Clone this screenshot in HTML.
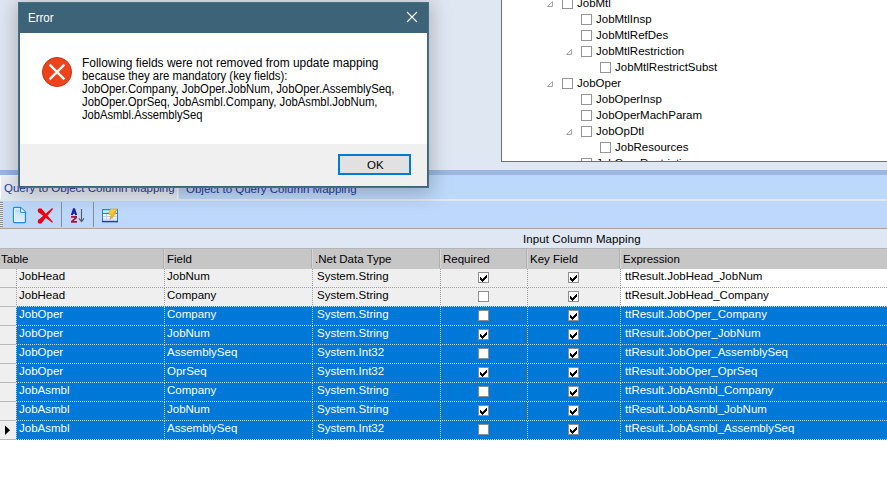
<!DOCTYPE html><html><head><meta charset="utf-8"><title>Error</title><style>
html,body{margin:0;padding:0}
body{width:887px;height:477px;position:relative;overflow:hidden;background:#ffffff;font-family:"Liberation Sans",sans-serif;color:#000}
.a{position:absolute}
.t{position:absolute;white-space:pre;line-height:1}
.cb{position:absolute;width:9px;height:9px;border:1px solid #8e8e8e;background:#fff}
.tcb{position:absolute;width:9px;height:9px;border:1px solid #959595;background:#fff}

</style></head><body>
<div class="a" style="left:0;top:0;width:887px;height:170px;background:#dfe7f2"></div>
<div class="a" style="left:501px;top:0;width:386px;height:161px;background:#fff;border-left:1px solid #707070;border-bottom:1px solid #707070;overflow:hidden">
<svg class="a" style="left:45px;top:1px" width="7" height="7" viewBox="0 0 7 7"><path d="M0.5 5.5 L5.5 5.5 L5.5 0.5 Z" fill="#fff" stroke="#a6a6a6" stroke-width="1"/></svg>
<div class="tcb" style="left:60px;top:-2px"></div>
<div class="t" style="left:75px;top:-2px;font-size:11.5px">JobMtl</div>
<div class="tcb" style="left:79px;top:14px"></div>
<div class="t" style="left:94px;top:14px;font-size:11.5px">JobMtlInsp</div>
<div class="tcb" style="left:79px;top:30px"></div>
<div class="t" style="left:94px;top:30px;font-size:11.5px">JobMtlRefDes</div>
<svg class="a" style="left:64px;top:49px" width="7" height="7" viewBox="0 0 7 7"><path d="M0.5 5.5 L5.5 5.5 L5.5 0.5 Z" fill="#fff" stroke="#a6a6a6" stroke-width="1"/></svg>
<div class="tcb" style="left:79px;top:46px"></div>
<div class="t" style="left:94px;top:46px;font-size:11.5px">JobMtlRestriction</div>
<div class="tcb" style="left:98px;top:62px"></div>
<div class="t" style="left:113px;top:62px;font-size:11.5px">JobMtlRestrictSubst</div>
<svg class="a" style="left:45px;top:81px" width="7" height="7" viewBox="0 0 7 7"><path d="M0.5 5.5 L5.5 5.5 L5.5 0.5 Z" fill="#fff" stroke="#a6a6a6" stroke-width="1"/></svg>
<div class="tcb" style="left:60px;top:78px"></div>
<div class="t" style="left:75px;top:78px;font-size:11.5px">JobOper</div>
<div class="tcb" style="left:79px;top:94px"></div>
<div class="t" style="left:94px;top:94px;font-size:11.5px">JobOperInsp</div>
<div class="tcb" style="left:79px;top:110px"></div>
<div class="t" style="left:94px;top:110px;font-size:11.5px">JobOperMachParam</div>
<svg class="a" style="left:64px;top:129px" width="7" height="7" viewBox="0 0 7 7"><path d="M0.5 5.5 L5.5 5.5 L5.5 0.5 Z" fill="#fff" stroke="#a6a6a6" stroke-width="1"/></svg>
<div class="tcb" style="left:79px;top:126px"></div>
<div class="t" style="left:94px;top:126px;font-size:11.5px">JobOpDtl</div>
<div class="tcb" style="left:98px;top:142px"></div>
<div class="t" style="left:113px;top:142px;font-size:11.5px">JobResources</div>
<div class="tcb" style="left:79px;top:158px"></div>
<div class="t" style="left:94px;top:158px;font-size:11.5px">JobOperRestriction</div>
</div>
<div class="a" style="left:0;top:170px;width:887px;height:5px;background:#99b7e0"></div>
<div class="a" style="left:0;top:175px;width:887px;height:24px;background:#bcd8fa"></div>
<div class="a" style="left:0;top:175px;width:179px;height:24px;background:linear-gradient(#f0f4f9,#dfe6ef)"></div>
<div class="a" style="left:0;top:176px;width:1px;height:23px;background:#fbfcfe"></div>
<div class="a" style="left:177px;top:176px;width:1px;height:23px;background:#f6f8fb"></div>
<div class="t" style="left:4px;top:183px;font-size:11.5px;color:#1c3f94">Query to Object Column Mapping</div>
<div class="t" style="left:186px;top:184px;font-size:11.5px;color:#1c3f94">Object to Query Column Mapping</div>
<div class="a" style="left:0;top:199px;width:887px;height:2px;background:#dfe7f1"></div>
<div class="a" style="left:0;top:201px;width:887px;height:27px;background:#bdd8fa"></div>
<div class="a" style="left:0;top:228px;width:887px;height:1px;background:#a3a3a3"></div>
<div class="a" style="left:0;top:202px;width:3px;height:25px;background:repeating-linear-gradient(#8c8c8c 0 1px,#e8e8e8 1px 2px)"></div>
<div class="a" style="left:61px;top:202px;width:1px;height:25px;background:#8d8d8d"></div>
<div class="a" style="left:93px;top:202px;width:1px;height:25px;background:#8d8d8d"></div>
<svg class="a" style="left:8px;top:204px" width="24" height="24" viewBox="0 0 24 24">
<defs><linearGradient id="dg" x1="0" y1="0" x2="0" y2="1"><stop offset="0" stop-color="#b6dcf8"/><stop offset="1" stop-color="#e4f3fe"/></linearGradient></defs>
<path d="M5.5 4.5 Q5.5 3.5 6.5 3.5 L12.5 3.5 L17.5 8 L17.5 17.5 Q17.5 18.5 16.5 18.5 L6.5 18.5 Q5.5 18.5 5.5 17.5 Z" fill="url(#dg)" stroke="#1a8ef0" stroke-width="1.3"/>
<path d="M6.6 4.6 L12 4.6 M6.6 4.6 L6.6 17.4 L16.4 17.4" stroke="#fff" stroke-width="0.8" fill="none"/>
<path d="M12.6 3.8 L17.2 8.2 L12.6 8.2 Z" fill="#fff"/>
<path d="M12.5 3.5 L12.5 8.4 L17.5 8.4" stroke="#1a8ef0" stroke-width="1" fill="none"/>
</svg>
<svg class="a" style="left:34px;top:204px" width="24" height="24" viewBox="0 0 24 24">
<g fill="#ee0010">
<polygon points="7.58,4.83 19.01,17.96 18.19,18.84 4.42,8.17"/><circle cx="6" cy="6.5" r="2.3"/>
<polygon points="4.35,15.9 18.17,4.08 19.03,4.92 7.65,19.1"/><circle cx="6" cy="17.5" r="2.3"/>
</g></svg>
<svg class="a" style="left:66px;top:204px" width="24" height="24" viewBox="0 0 24 24">
<path d="M5.8 11 L8 4.5 L10.2 11" stroke="#1c1ca6" stroke-width="1.9" fill="none" stroke-linejoin="bevel"/>
<path d="M6.5 9 H9.5" stroke="#1c1ca6" stroke-width="1.4"/>
<path d="M5 10.5 H7 M9 10.5 H11" stroke="#1c1ca6" stroke-width="1"/>
<path d="M5 12.8 H11 M10.6 13.3 L5.6 17.6 M5 17.9 H11" stroke="#b0103c" stroke-width="1.7" fill="none"/>
<path d="M15.5 5 V17" stroke="#5a5a5a" stroke-width="1.1"/>
<path d="M13 14.3 L15.5 17.6 L18 14.3" stroke="#5a5a5a" stroke-width="1.2" fill="none"/>
</svg>
<svg class="a" style="left:98px;top:204px" width="24" height="24" viewBox="0 0 24 24">
<defs><linearGradient id="hg" x1="0" y1="0" x2="0" y2="1"><stop offset="0" stop-color="#7cc4f4"/><stop offset="0.5" stop-color="#e8f6ff"/><stop offset="1" stop-color="#9fd0f4"/></linearGradient>
<linearGradient id="bg2" x1="0" y1="0" x2="1" y2="1"><stop offset="0" stop-color="#ffe45a"/><stop offset="1" stop-color="#e09a00"/></linearGradient></defs>
<rect x="4.5" y="5.5" width="15" height="12" fill="#fff" stroke="#1c86e6" stroke-width="1"/>
<rect x="5" y="6" width="14" height="3" fill="url(#hg)"/>
<path d="M5 9.5 H19" stroke="#1c86e6" stroke-width="1"/>
<path d="M4 17.5 H20" stroke="#1a3cb4" stroke-width="1.6"/>
<path d="M5 12.5 H19 M5 15 H19 M8.5 10 V17 M14.5 10 V17" stroke="#c9ccd2" stroke-width="1"/>
<path d="M12.5 5 L19.5 5 L16.5 9 L18.5 9 L12 15.5 L13.2 10.5 L10.5 10.5 Z" fill="url(#bg2)" stroke="#c88a00" stroke-width="0.5"/>
</svg>
<div class="a" style="left:0;top:229px;width:887px;height:19px;background:#dee7f3"></div>
<div class="t" style="left:523px;top:234px;font-size:11.5px;letter-spacing:0.1px">Input Column Mapping</div>
<div class="a" style="left:0;top:268px;width:16px;height:19px;background:#efefef"></div>
<div class="a" style="left:16px;top:268px;width:604px;height:19px;background:#efefef"></div>
<div class="a" style="left:620px;top:268px;width:267px;height:19px;background:#fff"></div>
<div class="t" style="left:19px;top:271px;font-size:11.5px;color:#000">JobHead</div>
<div class="t" style="left:167px;top:271px;font-size:11.5px;color:#000">JobNum</div>
<div class="t" style="left:317px;top:271px;font-size:11.5px;color:#000">System.String</div>
<div class="t" style="left:625px;top:271px;font-size:11.5px;color:#000">ttResult.JobHead_JobNum</div>
<div class="cb" style="left:478px;top:272px"><svg class="a" style="left:1px;top:2px" width="7" height="7" viewBox="0 0 7 7" shape-rendering="crispEdges"><path d="M6 0h1v1h-1zM5 1h2v1h-2zM0 2h1v1h-1zM4 2h3v1h-3zM0 3h2v1h-2zM3 3h3v1h-3zM0 4h5v1h-5zM1 5h3v1h-3zM2 6h1v1h-1z" fill="#000"/></svg></div>
<div class="cb" style="left:568px;top:272px"><svg class="a" style="left:1px;top:2px" width="7" height="7" viewBox="0 0 7 7" shape-rendering="crispEdges"><path d="M6 0h1v1h-1zM5 1h2v1h-2zM0 2h1v1h-1zM4 2h3v1h-3zM0 3h2v1h-2zM3 3h3v1h-3zM0 4h5v1h-5zM1 5h3v1h-3zM2 6h1v1h-1z" fill="#000"/></svg></div>
<div class="a" style="left:0;top:287px;width:16px;height:19px;background:#efefef"></div>
<div class="a" style="left:16px;top:287px;width:604px;height:19px;background:#efefef"></div>
<div class="a" style="left:620px;top:287px;width:267px;height:19px;background:#fff"></div>
<div class="t" style="left:19px;top:290px;font-size:11.5px;color:#000">JobHead</div>
<div class="t" style="left:167px;top:290px;font-size:11.5px;color:#000">Company</div>
<div class="t" style="left:317px;top:290px;font-size:11.5px;color:#000">System.String</div>
<div class="t" style="left:625px;top:290px;font-size:11.5px;color:#000">ttResult.JobHead_Company</div>
<div class="cb" style="left:478px;top:291px"></div>
<div class="cb" style="left:568px;top:291px"><svg class="a" style="left:1px;top:2px" width="7" height="7" viewBox="0 0 7 7" shape-rendering="crispEdges"><path d="M6 0h1v1h-1zM5 1h2v1h-2zM0 2h1v1h-1zM4 2h3v1h-3zM0 3h2v1h-2zM3 3h3v1h-3zM0 4h5v1h-5zM1 5h3v1h-3zM2 6h1v1h-1z" fill="#000"/></svg></div>
<div class="a" style="left:0;top:306px;width:16px;height:19px;background:#efefef"></div>
<div class="a" style="left:16px;top:306px;width:604px;height:19px;background:#0078d7"></div>
<div class="a" style="left:620px;top:306px;width:267px;height:19px;background:#0078d7"></div>
<div class="t" style="left:19px;top:309px;font-size:11.5px;color:#fff">JobOper</div>
<div class="t" style="left:167px;top:309px;font-size:11.5px;color:#fff">Company</div>
<div class="t" style="left:317px;top:309px;font-size:11.5px;color:#fff">System.String</div>
<div class="t" style="left:625px;top:309px;font-size:11.5px;color:#fff">ttResult.JobOper_Company</div>
<div class="cb" style="left:478px;top:310px"></div>
<div class="cb" style="left:568px;top:310px"><svg class="a" style="left:1px;top:2px" width="7" height="7" viewBox="0 0 7 7" shape-rendering="crispEdges"><path d="M6 0h1v1h-1zM5 1h2v1h-2zM0 2h1v1h-1zM4 2h3v1h-3zM0 3h2v1h-2zM3 3h3v1h-3zM0 4h5v1h-5zM1 5h3v1h-3zM2 6h1v1h-1z" fill="#000"/></svg></div>
<div class="a" style="left:0;top:325px;width:16px;height:19px;background:#efefef"></div>
<div class="a" style="left:16px;top:325px;width:604px;height:19px;background:#0078d7"></div>
<div class="a" style="left:620px;top:325px;width:267px;height:19px;background:#0078d7"></div>
<div class="t" style="left:19px;top:328px;font-size:11.5px;color:#fff">JobOper</div>
<div class="t" style="left:167px;top:328px;font-size:11.5px;color:#fff">JobNum</div>
<div class="t" style="left:317px;top:328px;font-size:11.5px;color:#fff">System.String</div>
<div class="t" style="left:625px;top:328px;font-size:11.5px;color:#fff">ttResult.JobOper_JobNum</div>
<div class="cb" style="left:478px;top:329px"><svg class="a" style="left:1px;top:2px" width="7" height="7" viewBox="0 0 7 7" shape-rendering="crispEdges"><path d="M6 0h1v1h-1zM5 1h2v1h-2zM0 2h1v1h-1zM4 2h3v1h-3zM0 3h2v1h-2zM3 3h3v1h-3zM0 4h5v1h-5zM1 5h3v1h-3zM2 6h1v1h-1z" fill="#000"/></svg></div>
<div class="cb" style="left:568px;top:329px"><svg class="a" style="left:1px;top:2px" width="7" height="7" viewBox="0 0 7 7" shape-rendering="crispEdges"><path d="M6 0h1v1h-1zM5 1h2v1h-2zM0 2h1v1h-1zM4 2h3v1h-3zM0 3h2v1h-2zM3 3h3v1h-3zM0 4h5v1h-5zM1 5h3v1h-3zM2 6h1v1h-1z" fill="#000"/></svg></div>
<div class="a" style="left:0;top:344px;width:16px;height:19px;background:#efefef"></div>
<div class="a" style="left:16px;top:344px;width:604px;height:19px;background:#0078d7"></div>
<div class="a" style="left:620px;top:344px;width:267px;height:19px;background:#0078d7"></div>
<div class="t" style="left:19px;top:347px;font-size:11.5px;color:#fff">JobOper</div>
<div class="t" style="left:167px;top:347px;font-size:11.5px;color:#fff">AssemblySeq</div>
<div class="t" style="left:317px;top:347px;font-size:11.5px;color:#fff">System.Int32</div>
<div class="t" style="left:625px;top:347px;font-size:11.5px;color:#fff">ttResult.JobOper_AssemblySeq</div>
<div class="cb" style="left:478px;top:348px"></div>
<div class="cb" style="left:568px;top:348px"><svg class="a" style="left:1px;top:2px" width="7" height="7" viewBox="0 0 7 7" shape-rendering="crispEdges"><path d="M6 0h1v1h-1zM5 1h2v1h-2zM0 2h1v1h-1zM4 2h3v1h-3zM0 3h2v1h-2zM3 3h3v1h-3zM0 4h5v1h-5zM1 5h3v1h-3zM2 6h1v1h-1z" fill="#000"/></svg></div>
<div class="a" style="left:0;top:363px;width:16px;height:19px;background:#efefef"></div>
<div class="a" style="left:16px;top:363px;width:604px;height:19px;background:#0078d7"></div>
<div class="a" style="left:620px;top:363px;width:267px;height:19px;background:#0078d7"></div>
<div class="t" style="left:19px;top:366px;font-size:11.5px;color:#fff">JobOper</div>
<div class="t" style="left:167px;top:366px;font-size:11.5px;color:#fff">OprSeq</div>
<div class="t" style="left:317px;top:366px;font-size:11.5px;color:#fff">System.Int32</div>
<div class="t" style="left:625px;top:366px;font-size:11.5px;color:#fff">ttResult.JobOper_OprSeq</div>
<div class="cb" style="left:478px;top:367px"><svg class="a" style="left:1px;top:2px" width="7" height="7" viewBox="0 0 7 7" shape-rendering="crispEdges"><path d="M6 0h1v1h-1zM5 1h2v1h-2zM0 2h1v1h-1zM4 2h3v1h-3zM0 3h2v1h-2zM3 3h3v1h-3zM0 4h5v1h-5zM1 5h3v1h-3zM2 6h1v1h-1z" fill="#000"/></svg></div>
<div class="cb" style="left:568px;top:367px"><svg class="a" style="left:1px;top:2px" width="7" height="7" viewBox="0 0 7 7" shape-rendering="crispEdges"><path d="M6 0h1v1h-1zM5 1h2v1h-2zM0 2h1v1h-1zM4 2h3v1h-3zM0 3h2v1h-2zM3 3h3v1h-3zM0 4h5v1h-5zM1 5h3v1h-3zM2 6h1v1h-1z" fill="#000"/></svg></div>
<div class="a" style="left:0;top:382px;width:16px;height:19px;background:#efefef"></div>
<div class="a" style="left:16px;top:382px;width:604px;height:19px;background:#0078d7"></div>
<div class="a" style="left:620px;top:382px;width:267px;height:19px;background:#0078d7"></div>
<div class="t" style="left:19px;top:385px;font-size:11.5px;color:#fff">JobAsmbl</div>
<div class="t" style="left:167px;top:385px;font-size:11.5px;color:#fff">Company</div>
<div class="t" style="left:317px;top:385px;font-size:11.5px;color:#fff">System.String</div>
<div class="t" style="left:625px;top:385px;font-size:11.5px;color:#fff">ttResult.JobAsmbl_Company</div>
<div class="cb" style="left:478px;top:386px"></div>
<div class="cb" style="left:568px;top:386px"><svg class="a" style="left:1px;top:2px" width="7" height="7" viewBox="0 0 7 7" shape-rendering="crispEdges"><path d="M6 0h1v1h-1zM5 1h2v1h-2zM0 2h1v1h-1zM4 2h3v1h-3zM0 3h2v1h-2zM3 3h3v1h-3zM0 4h5v1h-5zM1 5h3v1h-3zM2 6h1v1h-1z" fill="#000"/></svg></div>
<div class="a" style="left:0;top:401px;width:16px;height:19px;background:#efefef"></div>
<div class="a" style="left:16px;top:401px;width:604px;height:19px;background:#0078d7"></div>
<div class="a" style="left:620px;top:401px;width:267px;height:19px;background:#0078d7"></div>
<div class="t" style="left:19px;top:404px;font-size:11.5px;color:#fff">JobAsmbl</div>
<div class="t" style="left:167px;top:404px;font-size:11.5px;color:#fff">JobNum</div>
<div class="t" style="left:317px;top:404px;font-size:11.5px;color:#fff">System.String</div>
<div class="t" style="left:625px;top:404px;font-size:11.5px;color:#fff">ttResult.JobAsmbl_JobNum</div>
<div class="cb" style="left:478px;top:405px"><svg class="a" style="left:1px;top:2px" width="7" height="7" viewBox="0 0 7 7" shape-rendering="crispEdges"><path d="M6 0h1v1h-1zM5 1h2v1h-2zM0 2h1v1h-1zM4 2h3v1h-3zM0 3h2v1h-2zM3 3h3v1h-3zM0 4h5v1h-5zM1 5h3v1h-3zM2 6h1v1h-1z" fill="#000"/></svg></div>
<div class="cb" style="left:568px;top:405px"><svg class="a" style="left:1px;top:2px" width="7" height="7" viewBox="0 0 7 7" shape-rendering="crispEdges"><path d="M6 0h1v1h-1zM5 1h2v1h-2zM0 2h1v1h-1zM4 2h3v1h-3zM0 3h2v1h-2zM3 3h3v1h-3zM0 4h5v1h-5zM1 5h3v1h-3zM2 6h1v1h-1z" fill="#000"/></svg></div>
<div class="a" style="left:0;top:420px;width:16px;height:19px;background:#efefef"></div>
<div class="a" style="left:16px;top:420px;width:604px;height:20px;background:#0078d7"></div>
<div class="a" style="left:620px;top:420px;width:267px;height:20px;background:#0078d7"></div>
<div class="t" style="left:19px;top:423px;font-size:11.5px;color:#fff">JobAsmbl</div>
<div class="t" style="left:167px;top:423px;font-size:11.5px;color:#fff">AssemblySeq</div>
<div class="t" style="left:317px;top:423px;font-size:11.5px;color:#fff">System.Int32</div>
<div class="t" style="left:625px;top:423px;font-size:11.5px;color:#fff">ttResult.JobAsmbl_AssemblySeq</div>
<div class="cb" style="left:478px;top:424px"></div>
<div class="cb" style="left:568px;top:424px"><svg class="a" style="left:1px;top:2px" width="7" height="7" viewBox="0 0 7 7" shape-rendering="crispEdges"><path d="M6 0h1v1h-1zM5 1h2v1h-2zM0 2h1v1h-1zM4 2h3v1h-3zM0 3h2v1h-2zM3 3h3v1h-3zM0 4h5v1h-5zM1 5h3v1h-3zM2 6h1v1h-1z" fill="#000"/></svg></div>
<div class="a" style="left:0;top:287px;width:16px;height:1px;background:#b9b9b9"></div>
<div class="a" style="left:16px;top:287px;width:871px;height:1px;background:repeating-linear-gradient(90deg,#a0a0a0 0 1px,transparent 1px 2px)"></div>
<div class="a" style="left:0;top:306px;width:16px;height:1px;background:#b9b9b9"></div>
<div class="a" style="left:16px;top:306px;width:871px;height:1px;background:repeating-linear-gradient(90deg,#d6d6cf 0 1px,transparent 1px 2px)"></div>
<div class="a" style="left:0;top:325px;width:16px;height:1px;background:#b9b9b9"></div>
<div class="a" style="left:16px;top:325px;width:871px;height:1px;background:repeating-linear-gradient(90deg,#d6d6cf 0 1px,transparent 1px 2px)"></div>
<div class="a" style="left:0;top:344px;width:16px;height:1px;background:#b9b9b9"></div>
<div class="a" style="left:16px;top:344px;width:871px;height:1px;background:repeating-linear-gradient(90deg,#d6d6cf 0 1px,transparent 1px 2px)"></div>
<div class="a" style="left:0;top:363px;width:16px;height:1px;background:#b9b9b9"></div>
<div class="a" style="left:16px;top:363px;width:871px;height:1px;background:repeating-linear-gradient(90deg,#d6d6cf 0 1px,transparent 1px 2px)"></div>
<div class="a" style="left:0;top:382px;width:16px;height:1px;background:#b9b9b9"></div>
<div class="a" style="left:16px;top:382px;width:871px;height:1px;background:repeating-linear-gradient(90deg,#d6d6cf 0 1px,transparent 1px 2px)"></div>
<div class="a" style="left:0;top:401px;width:16px;height:1px;background:#b9b9b9"></div>
<div class="a" style="left:16px;top:401px;width:871px;height:1px;background:repeating-linear-gradient(90deg,#d6d6cf 0 1px,transparent 1px 2px)"></div>
<div class="a" style="left:0;top:420px;width:16px;height:1px;background:#b9b9b9"></div>
<div class="a" style="left:16px;top:420px;width:871px;height:1px;background:repeating-linear-gradient(90deg,#d6d6cf 0 1px,transparent 1px 2px)"></div>
<div class="a" style="left:0;top:439px;width:16px;height:1px;background:#b9b9b9"></div>
<div class="a" style="left:16px;top:439px;width:871px;height:1px;background:repeating-linear-gradient(90deg,#d6d6cf 0 1px,transparent 1px 2px)"></div>
<div class="a" style="left:16px;top:269px;width:1px;height:18px;background:repeating-linear-gradient(#a0a0a0 0 1px,transparent 1px 2px)"></div>
<div class="a" style="left:164px;top:269px;width:1px;height:18px;background:repeating-linear-gradient(#a0a0a0 0 1px,transparent 1px 2px)"></div>
<div class="a" style="left:312px;top:269px;width:1px;height:18px;background:repeating-linear-gradient(#a0a0a0 0 1px,transparent 1px 2px)"></div>
<div class="a" style="left:440px;top:269px;width:1px;height:18px;background:repeating-linear-gradient(#a0a0a0 0 1px,transparent 1px 2px)"></div>
<div class="a" style="left:527px;top:269px;width:1px;height:18px;background:repeating-linear-gradient(#a0a0a0 0 1px,transparent 1px 2px)"></div>
<div class="a" style="left:620px;top:269px;width:1px;height:18px;background:repeating-linear-gradient(#a0a0a0 0 1px,transparent 1px 2px)"></div>
<div class="a" style="left:16px;top:288px;width:1px;height:18px;background:repeating-linear-gradient(#a0a0a0 0 1px,transparent 1px 2px)"></div>
<div class="a" style="left:164px;top:288px;width:1px;height:18px;background:repeating-linear-gradient(#a0a0a0 0 1px,transparent 1px 2px)"></div>
<div class="a" style="left:312px;top:288px;width:1px;height:18px;background:repeating-linear-gradient(#a0a0a0 0 1px,transparent 1px 2px)"></div>
<div class="a" style="left:440px;top:288px;width:1px;height:18px;background:repeating-linear-gradient(#a0a0a0 0 1px,transparent 1px 2px)"></div>
<div class="a" style="left:527px;top:288px;width:1px;height:18px;background:repeating-linear-gradient(#a0a0a0 0 1px,transparent 1px 2px)"></div>
<div class="a" style="left:620px;top:288px;width:1px;height:18px;background:repeating-linear-gradient(#a0a0a0 0 1px,transparent 1px 2px)"></div>
<div class="a" style="left:16px;top:307px;width:1px;height:18px;background:repeating-linear-gradient(#c9c9c9 0 1px,transparent 1px 2px)"></div>
<div class="a" style="left:164px;top:307px;width:1px;height:18px;background:repeating-linear-gradient(#c9c9c9 0 1px,transparent 1px 2px)"></div>
<div class="a" style="left:312px;top:307px;width:1px;height:18px;background:repeating-linear-gradient(#c9c9c9 0 1px,transparent 1px 2px)"></div>
<div class="a" style="left:440px;top:307px;width:1px;height:18px;background:repeating-linear-gradient(#c9c9c9 0 1px,transparent 1px 2px)"></div>
<div class="a" style="left:527px;top:307px;width:1px;height:18px;background:repeating-linear-gradient(#c9c9c9 0 1px,transparent 1px 2px)"></div>
<div class="a" style="left:620px;top:307px;width:1px;height:18px;background:repeating-linear-gradient(#c9c9c9 0 1px,transparent 1px 2px)"></div>
<div class="a" style="left:16px;top:326px;width:1px;height:18px;background:repeating-linear-gradient(#c9c9c9 0 1px,transparent 1px 2px)"></div>
<div class="a" style="left:164px;top:326px;width:1px;height:18px;background:repeating-linear-gradient(#c9c9c9 0 1px,transparent 1px 2px)"></div>
<div class="a" style="left:312px;top:326px;width:1px;height:18px;background:repeating-linear-gradient(#c9c9c9 0 1px,transparent 1px 2px)"></div>
<div class="a" style="left:440px;top:326px;width:1px;height:18px;background:repeating-linear-gradient(#c9c9c9 0 1px,transparent 1px 2px)"></div>
<div class="a" style="left:527px;top:326px;width:1px;height:18px;background:repeating-linear-gradient(#c9c9c9 0 1px,transparent 1px 2px)"></div>
<div class="a" style="left:620px;top:326px;width:1px;height:18px;background:repeating-linear-gradient(#c9c9c9 0 1px,transparent 1px 2px)"></div>
<div class="a" style="left:16px;top:345px;width:1px;height:18px;background:repeating-linear-gradient(#c9c9c9 0 1px,transparent 1px 2px)"></div>
<div class="a" style="left:164px;top:345px;width:1px;height:18px;background:repeating-linear-gradient(#c9c9c9 0 1px,transparent 1px 2px)"></div>
<div class="a" style="left:312px;top:345px;width:1px;height:18px;background:repeating-linear-gradient(#c9c9c9 0 1px,transparent 1px 2px)"></div>
<div class="a" style="left:440px;top:345px;width:1px;height:18px;background:repeating-linear-gradient(#c9c9c9 0 1px,transparent 1px 2px)"></div>
<div class="a" style="left:527px;top:345px;width:1px;height:18px;background:repeating-linear-gradient(#c9c9c9 0 1px,transparent 1px 2px)"></div>
<div class="a" style="left:620px;top:345px;width:1px;height:18px;background:repeating-linear-gradient(#c9c9c9 0 1px,transparent 1px 2px)"></div>
<div class="a" style="left:16px;top:364px;width:1px;height:18px;background:repeating-linear-gradient(#c9c9c9 0 1px,transparent 1px 2px)"></div>
<div class="a" style="left:164px;top:364px;width:1px;height:18px;background:repeating-linear-gradient(#c9c9c9 0 1px,transparent 1px 2px)"></div>
<div class="a" style="left:312px;top:364px;width:1px;height:18px;background:repeating-linear-gradient(#c9c9c9 0 1px,transparent 1px 2px)"></div>
<div class="a" style="left:440px;top:364px;width:1px;height:18px;background:repeating-linear-gradient(#c9c9c9 0 1px,transparent 1px 2px)"></div>
<div class="a" style="left:527px;top:364px;width:1px;height:18px;background:repeating-linear-gradient(#c9c9c9 0 1px,transparent 1px 2px)"></div>
<div class="a" style="left:620px;top:364px;width:1px;height:18px;background:repeating-linear-gradient(#c9c9c9 0 1px,transparent 1px 2px)"></div>
<div class="a" style="left:16px;top:383px;width:1px;height:18px;background:repeating-linear-gradient(#c9c9c9 0 1px,transparent 1px 2px)"></div>
<div class="a" style="left:164px;top:383px;width:1px;height:18px;background:repeating-linear-gradient(#c9c9c9 0 1px,transparent 1px 2px)"></div>
<div class="a" style="left:312px;top:383px;width:1px;height:18px;background:repeating-linear-gradient(#c9c9c9 0 1px,transparent 1px 2px)"></div>
<div class="a" style="left:440px;top:383px;width:1px;height:18px;background:repeating-linear-gradient(#c9c9c9 0 1px,transparent 1px 2px)"></div>
<div class="a" style="left:527px;top:383px;width:1px;height:18px;background:repeating-linear-gradient(#c9c9c9 0 1px,transparent 1px 2px)"></div>
<div class="a" style="left:620px;top:383px;width:1px;height:18px;background:repeating-linear-gradient(#c9c9c9 0 1px,transparent 1px 2px)"></div>
<div class="a" style="left:16px;top:402px;width:1px;height:18px;background:repeating-linear-gradient(#c9c9c9 0 1px,transparent 1px 2px)"></div>
<div class="a" style="left:164px;top:402px;width:1px;height:18px;background:repeating-linear-gradient(#c9c9c9 0 1px,transparent 1px 2px)"></div>
<div class="a" style="left:312px;top:402px;width:1px;height:18px;background:repeating-linear-gradient(#c9c9c9 0 1px,transparent 1px 2px)"></div>
<div class="a" style="left:440px;top:402px;width:1px;height:18px;background:repeating-linear-gradient(#c9c9c9 0 1px,transparent 1px 2px)"></div>
<div class="a" style="left:527px;top:402px;width:1px;height:18px;background:repeating-linear-gradient(#c9c9c9 0 1px,transparent 1px 2px)"></div>
<div class="a" style="left:620px;top:402px;width:1px;height:18px;background:repeating-linear-gradient(#c9c9c9 0 1px,transparent 1px 2px)"></div>
<div class="a" style="left:16px;top:421px;width:1px;height:18px;background:repeating-linear-gradient(#c9c9c9 0 1px,transparent 1px 2px)"></div>
<div class="a" style="left:164px;top:421px;width:1px;height:18px;background:repeating-linear-gradient(#c9c9c9 0 1px,transparent 1px 2px)"></div>
<div class="a" style="left:312px;top:421px;width:1px;height:18px;background:repeating-linear-gradient(#c9c9c9 0 1px,transparent 1px 2px)"></div>
<div class="a" style="left:440px;top:421px;width:1px;height:18px;background:repeating-linear-gradient(#c9c9c9 0 1px,transparent 1px 2px)"></div>
<div class="a" style="left:527px;top:421px;width:1px;height:18px;background:repeating-linear-gradient(#c9c9c9 0 1px,transparent 1px 2px)"></div>
<div class="a" style="left:620px;top:421px;width:1px;height:18px;background:repeating-linear-gradient(#c9c9c9 0 1px,transparent 1px 2px)"></div>
<div class="a" style="left:0;top:248px;width:887px;height:21px;background:#c6c6c6"></div>
<div class="a" style="left:0;top:248px;width:887px;height:1px;background:#b4b4b4"></div>
<div class="a" style="left:164px;top:249px;width:1px;height:19px;background:#d6d6d6"></div>
<div class="a" style="left:163px;top:249px;width:1px;height:19px;background:#b0b0b0"></div>
<div class="a" style="left:312px;top:249px;width:1px;height:19px;background:#d6d6d6"></div>
<div class="a" style="left:311px;top:249px;width:1px;height:19px;background:#b0b0b0"></div>
<div class="a" style="left:440px;top:249px;width:1px;height:19px;background:#d6d6d6"></div>
<div class="a" style="left:439px;top:249px;width:1px;height:19px;background:#b0b0b0"></div>
<div class="a" style="left:527px;top:249px;width:1px;height:19px;background:#d6d6d6"></div>
<div class="a" style="left:526px;top:249px;width:1px;height:19px;background:#b0b0b0"></div>
<div class="a" style="left:620px;top:249px;width:1px;height:19px;background:#d6d6d6"></div>
<div class="a" style="left:619px;top:249px;width:1px;height:19px;background:#b0b0b0"></div>
<div class="t" style="left:1px;top:254px;font-size:11.5px">Table</div>
<div class="t" style="left:167px;top:254px;font-size:11.5px">Field</div>
<div class="t" style="left:315px;top:254px;font-size:11.5px">.Net Data Type</div>
<div class="t" style="left:443px;top:254px;font-size:11.5px">Required</div>
<div class="t" style="left:530px;top:254px;font-size:11.5px">Key Field</div>
<div class="t" style="left:623px;top:254px;font-size:11.5px">Expression</div>
<svg class="a" style="left:5px;top:425px" width="6" height="11" viewBox="0 0 6 11"><path d="M0 0.5 L5 5.25 L0 10Z" fill="#000"/></svg>
<div class="a" style="left:18px;top:2px;width:411px;height:186px;box-shadow:0 3px 18px 3px rgba(0,0,0,0.22)"></div>
<div class="a" style="left:18px;top:2px;width:409px;height:184px;border:1px solid #4a6f83;background:#3c6378"></div>
<div class="a" style="left:20px;top:33px;width:407px;height:111px;background:#fff"></div>
<div class="a" style="left:20px;top:144px;width:407px;height:42px;background:#f0f0f0"></div>
<div class="t" style="left:28px;top:12px;font-size:12.5px;color:#fff;transform-origin:0 0;transform:scaleX(0.92)">Error</div>
<svg class="a" style="left:406px;top:11px" width="12" height="12" viewBox="0 0 12 12"><path d="M1 1 L11 11 M11 1 L1 11" stroke="#fff" stroke-width="1.1"/></svg>
<svg class="a" style="left:41px;top:56px" width="32" height="32" viewBox="0 0 32 32">
<circle cx="16" cy="16" r="14.6" fill="#ee421b" stroke="#b8321a" stroke-width="0.9"/>
<path d="M8.6 8.6 L23.4 23.4 M23.4 8.6 L8.6 23.4" stroke="#fff" stroke-width="2.3"/>
</svg>
<div class="t" style="left:81.5px;top:57px;font-size:12px;color:#000;transform-origin:0 0;transform:scaleX(0.9944)">Following fields were not removed from update mapping</div>
<div class="t" style="left:81.5px;top:70px;font-size:12px;color:#000;transform-origin:0 0;transform:scaleX(0.9480)">because they are mandatory (key fields):</div>
<div class="t" style="left:81.5px;top:83px;font-size:12px;color:#000;transform-origin:0 0;transform:scaleX(0.9433)">JobOper.Company, JobOper.JobNum, JobOper.AssemblySeq,</div>
<div class="t" style="left:81.5px;top:96px;font-size:12px;color:#000;transform-origin:0 0;transform:scaleX(0.9413)">JobOper.OprSeq, JobAsmbl.Company, JobAsmbl.JobNum,</div>
<div class="t" style="left:81.5px;top:109px;font-size:12px;color:#000;transform-origin:0 0;transform:scaleX(0.9313)">JobAsmbl.AssemblySeq</div>
<div class="a" style="left:338px;top:154px;width:69px;height:17px;border:2px solid #0078d7;background:#e1e1e1"></div>
<div class="t" style="left:367px;top:160px;font-size:11.5px">OK</div>
</body></html>
